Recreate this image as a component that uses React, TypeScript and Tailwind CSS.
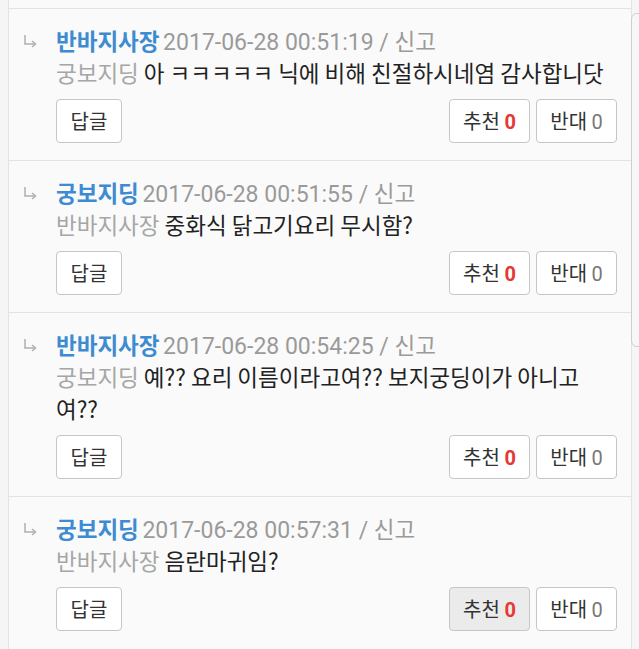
import React from "react";

type Item = {
  name: string;
  time: string;
  to: string;
  text: React.ReactNode;
  liked?: boolean;
};

const items: Item[] = [
  { name: "반바지사장", time: "2017-06-28 00:51:19", to: "궁보지딩", text: "아 ㅋㅋㅋㅋㅋ 닉에 비해 친절하시네염 감사합니닷" },
  { name: "궁보지딩", time: "2017-06-28 00:51:55", to: "반바지사장", text: "중화식 닭고기요리 무시함?" },
  {
    name: "반바지사장",
    time: "2017-06-28 00:54:25",
    to: "궁보지딩",
    text: (
      <>
        예?? 요리 이름이라고여?? 보지궁딩이가 아니고
        <br />
        여??
      </>
    ),
  },
  { name: "궁보지딩", time: "2017-06-28 00:57:31", to: "반바지사장", text: "음란마귀임?", liked: true },
];

const KR = "font-['Noto_Sans_CJK_KR','Noto_Sans',sans-serif]";

function Arrow() {
  return (
    <svg width="16" height="14" viewBox="0 0 16 14" fill="none" stroke="#b0b0b0" strokeWidth="1.5">
      <path d="M3 1 V10 H13" />
      <path d="M10 7 L13.5 10 L10 13" />
    </svg>
  );
}

function Row({ it }: { it: Item }) {
  return (
    <div className="flex border-t border-[#e3e3e3] pt-[15px] pb-[17px] pr-[14px]">
      <div className="w-[47px] shrink-0 pl-[13px] pt-[10px]">
        <Arrow />
      </div>
      <div className="flex-1">
        <div className="h-[32px] leading-[32px] whitespace-nowrap">
          <span className="text-[22.5px] font-bold text-[#3d8bd1]">{it.name}</span>{" "}
          <span className="font-['Roboto',sans-serif] text-[23px] text-[#9a9a9a]">{it.time} / </span>
          <span className="text-[22.5px] text-[#9a9a9a]">신고</span>
        </div>
        <div className="text-[22.5px] leading-[32px] text-[#222]">
          <span className="text-[#a6a6a6]">{it.to}</span> {it.text}
        </div>
        <div className="mt-[11px] flex h-[44px] items-stretch">
          <button className="w-[66px] rounded-[4px] border border-[#c6c6c6] bg-white text-[20px] text-[#333]">
            답글
          </button>
          <div className="flex-1" />
          <button
            className={`w-[81px] rounded-[4px] border border-[#c6c6c6] text-[20px] text-[#333] ${
              it.liked ? "bg-[#ebebeb]" : "bg-white"
            }`}
          >
            추천 <span className="font-['Roboto',sans-serif] font-bold text-[#e53935]">0</span>
          </button>
          <button className="ml-[6px] w-[81px] rounded-[4px] border border-[#c6c6c6] bg-white text-[20px] text-[#333]">
            반대 <span className="font-['Roboto',sans-serif] text-[#777]">0</span>
          </button>
        </div>
      </div>
    </div>
  );
}

export default function App() {
  return (
    <div className={`relative h-[649px] w-[639px] overflow-hidden bg-[#f5f5f5] ${KR}`}>
      <div className="ml-[8px] mr-[7px] h-full border-l border-r border-[#e3e3e3] bg-[#fafafa]">
        <div className="h-[8px]" />
        {items.map((it, i) => (
          <Row key={i} it={it} />
        ))}
      </div>
      <div className="absolute left-[631px] top-[13px] h-[334px] w-[10px] rounded-l-[6px] border border-[#cfcfcf] bg-[#f7f7f7]" />
    </div>
  );
}
